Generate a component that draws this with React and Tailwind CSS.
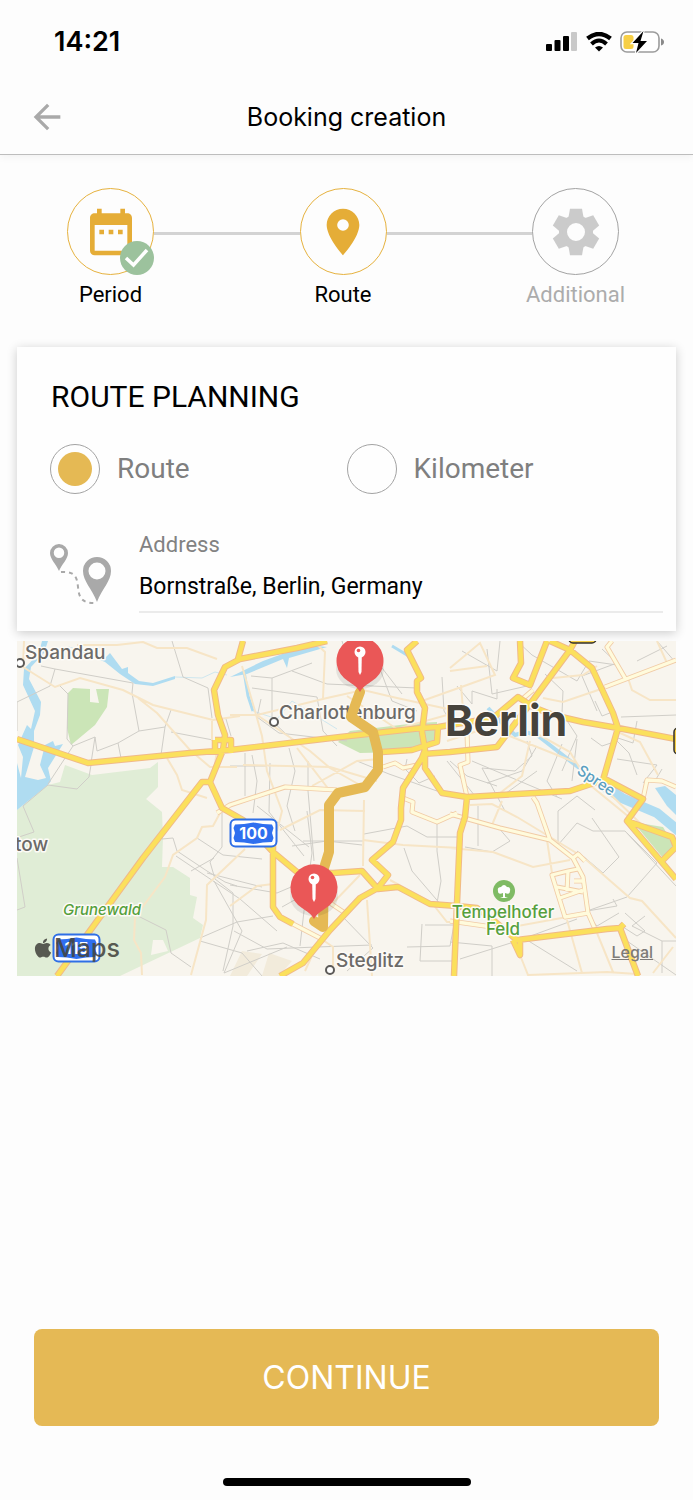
import React, { useState } from 'react';
import { MdArrowBack, MdDateRange, MdPlace } from 'react-icons/md';
import { FaApple } from 'react-icons/fa';

const steps = [
  { title: 'Period', icon: MdDateRange, ring: 'border-[#e6b23f]', color: 'text-[#e5ad37]', label: 'text-black', done: true },
  { title: 'Route', icon: MdPlace, ring: 'border-[#e6b23f]', color: 'text-[#e5ad37]', label: 'text-black' },
  { title: 'Additional', icon: GearIcon, ring: 'border-[#a3a3a3]', color: 'text-[#cbcbcb]', label: 'text-[#acacac]' },
];

const modes = [
  { id: 'route', title: 'Route' },
  { id: 'kilometer', title: 'Kilometer' },
];

const greyLines = [
  'M155 0 166 36 191 47 195 77', 'M24 25 38 28 116 42 115 52 122 90 148 86 154 69', 'M38 28 33 45 0 61V90',
  'M43 45 51 53 50 98 56 105 31 143M56 105 78 96 80 110 101 102 122 90', 'M101 102 104 117M148 86 144 114M154 91 196 99',
  'M74 124 72 136 60 148 31 144 6 165 17 191 2 196', 'M0 217 8 266 0 269M78 96 74 122', 'M209 78 214 95',
  'M145 198 156 197 160 210 190 230 208 241 220 245', 'M159 215 223 258 260 290', 'M180 197 206 214 245 218',
  'M205 172V206L193 221 198 238 216 252V285L206 330', 'M197 217 174 230M197 240 225 290 207 332 270 306',
  'M121 275 149 289 154 312 174 326', 'M183 297 220 281 256 275M183 300 225 312 245 335', 'M190 232 245 246',
  'M234 35 255 37 295 22M275 30 310 43 400 47', 'M255 37V80L281 104', 'M235 47 300 56 306 90 320 105',
  'M244 58 240 76 262 92 330 100', 'M235 114 240 140 236 172M228 112V155', 'M253 122 252 171 287 215',
  'M272 107 278 130 270 165 278 190', 'M291 120V150L297 220M213 125H250', 'M325 0 332 22 352 10 385 53',
  'M360 20 375 60 400 70', 'M425 36 427 70 440 90M430 120 458 155', 'M390 118 388 128 402 142 418 135',
  'M340 120 372 133 420 150', 'M347 193 390 185 410 196H440', 'M286 200H346M275 205 310 200 345 204',
  'M387 207 395 230 425 265M420 181V210L424 240 420 262', 'M405 283 403 320H440M408 284H437L433 305 390 306',
  'M325 275 356 307 330 330', 'M213 244 260 252 300 235', 'M265 266 290 252M230 310 266 302 303 318',
  'M217 290 250 308 300 306 355 304', 'M290 170 295 212 287 270 283 305', 'M240 165 292 206',
  'M445 10 480 30 483 0M470 8 475 53 510 45', 'M440 45 455 63V50L480 58V48', 'M500 0 515 14 560 40 572 20 600 24',
  'M528 33 546 50 545 72 560 95 545 130', 'M578 60 585 75 598 70M604 76 659 74', 'M620 80 616 102 601 97',
  'M574 97 585 105 600 100 612 112 620 134', 'M510 100 515 115 498 130 465 127', 'M465 127 488 170M455 120 545 158',
  'M470 142 505 130 520 105M485 155 520 130', 'M545 103 530 140 540 156M560 98 555 140', 'M600 118 640 124 626 142',
  'M645 128 638 140M586 45 590 60', 'M620 20 650 5M640 0 659 22', 'M433 120 450 135 480 145',
  'M461 165V205M480 185 493 200 475 211 448 206', 'M541 204V170L560 155 578 169M541 204 560 182 576 190',
  'M575 177 602 216 586 232 560 210M576 190 608 190 659 245', 'M610 192 640 222 610 256 570 270 600 265 596 258',
  'M571 275 580 285 602 272M608 272 628 290 620 295 606 286', 'M443 318 500 300 560 278M433 301 475 305V335',
  'M510 299 560 330M645 332V300L615 285 628 275', 'M645 300H659M610 300 659 334', 'M585 8 600 22 565 35 580 70',
];

const tanRoads = [
  'M6 26 38 46 63 37 106 49 136 64 196 79 223 75', 'M121 57 140 72 173 109 193 126H220', 'M60 4 100 4 126 1 140 7 170 7 200 18',
  'M150 117 160 134 165 149 190 157', 'M195 79V100M200 110 196 135M7 0 6 26', 'M203 172 196 185 185 186 180 197 156 214 148 236 118 276 117 299 124 312 125 334',
  'M228 208 190 244 189 279 174 334', 'M225 25 238 70 245 95 250 130 265 170 260 190', 'M296 0 308 11 306 57',
  'M213 74H240L310 57 346 49 380 57 440 70', 'M240 74 293 110 313 127 350 148', 'M226 124 313 126 360 140',
  'M280 107 313 150M330 55 380 88 430 74', 'M295 145 340 120 362 118', 'M433 27 463 2 478 34 450 44 405 60',
  'M433 30 470 25M444 44 448 94', 'M526 57 546 61 590 46M536 37 566 34 580 25', 'M611 37 615 49 633 59H659',
  'M601 91 623 101 641 134M515 90 553 111 573 144 612 176', 'M513 100 505 135 478 156M490 94 560 122',
  'M263 189 303 169 348 170M347 159 346 225', 'M346 199 386 204 443 207', 'M350 259 355 335', 'M343 234 313 265M303 297 316 306V330M303 297 288 330',
  'M373 239 415 262 430 281H440', 'M433 207 476 211 516 226 553 219', 'M453 164 475 163 500 176 566 216 613 257 625 260 659 297',
  'M550 279 565 332M580 292 596 331M503 314 511 334 590 331 620 333', 'M490 287 550 276M530 199 535 232', 'M656 306 636 332M485 160 475 184',
  'M640 0 650 22M590 150 626 185', 'M213 265 240 245 256 243', 'M430 100 460 90 476 77',
];

const paleRoads = [
  'M433 173 483 187 533 199 556 217 566 236 571 272 578 288', 'M516 156 520 162 533 199', 'M571 272 548 276 535 234 551 230 561 228',
  'M540 246 566 251M543 257 566 249M551 230 550 250M557 240H566', 'M595 0 590 6 608 37M588 46 659 19', 'M626 158 630 139 645 140 659 146',
  'M450 92 451 121 443 124 450 156', 'M200 172 213 164 268 146 320 149', 'M366 126 378 122 386 127 400 124 404 120',
  'M386 157 396 161 395 171 420 181 440 172', 'M276 283 303 297M310 260 328 272', 'M433 280 475 286', 'M516 49 503 60', 'M556 217 561 213 568 220',
];

const mainRoads = [
  'M0 98 71 122 173 112 213 109 323 96 405 87 421 86 420 101 395 109 365 111', 'M226 0 221 18',
  'M310 0 280 7 223 18 208 26 197 49 201 74 208 94 206 109 193 141 205 167 226 179 256 211 280 231 316 232 345 230 361 248 381 246 413 263 440 265 460 267 476 279 500 299 590 288 603 287 621 335',
  'M193 141H185L126 217 40 335', 'M198 99H214V112M198 99V112', 'M256 200V266L263 276 276 283',
  'M263 335 286 322 313 289 343 257 361 247 371 234 355 219 376 201 384 179V167L386 147 405 117 408 109 405 91 408 67 400 51V40L404 37 390 9 400 0',
  'M408 109V127L425 152 450 156 553 150 586 139 601 87 596 72 575 27 553 9 533 0', 'M558 0 553 9 516 59 480 106 433 111 406 113',
  'M503 0 504 22 496 37 513 44 530 0', 'M659 98 601 87 566 81 536 74 516 66 501 56 476 77 433 84 421 86',
  'M586 137 626 158 610 180 659 238', 'M610 180 655 196 659 206 646 219', 'M450 156 448 176 443 192 440 262 437 335',
  'M496 299 503 314V300M603 287 607 283',
];

const placeLabels = [
  { text: 'Spandau', x: 8, y: 18 },
  { text: 'Charlottenburg', x: 262, y: 78 },
  { text: 'Steglitz', x: 319, y: 326 },
  { text: 'tow', x: -2, y: 210 },
];

const teeth = [0, 60, 120, 180, 240, 300];

function GearIcon({ className }) {
  return (
    <svg className={`w-14 h-14 ${className}`} viewBox="-28 -28 56 56" fill="currentColor">
      <circle r="13" fill="none" stroke="currentColor" strokeWidth="8" />
      {teeth.map((angle) => (
        <path key={angle} d="M-6-23.300H6L8-12H-8Z" transform={`rotate(${angle})`} />
      ))}
    </svg>
  );
}

function StatusBar() {
  return (
    <div className="h-[84px] flex items-center justify-between pl-[54px] pr-[29px]">
      <span className="font-['Inter',sans-serif] text-[27px] leading-8 font-semibold">14:21</span>
      <div className="flex items-center gap-2">
        <svg className="w-8 h-5" viewBox="0 0 32 20">
          <rect x="0" y="12" width="6" height="7" rx="1" />
          <rect x="8.500" y="8" width="6" height="11" rx="1" />
          <rect x="17" y="4" width="6" height="15" rx="1" />
          <rect x="25" y="0" width="6" height="19" rx="1" fill="#c9c9c9" />
        </svg>
        <svg className="w-[26px] h-5" viewBox="0 0 26 20">
          <path d="M1.500 6.500Q13-2.500 24.500 6.500" fill="none" stroke="#000" strokeWidth="4.400" />
          <path d="M5.500 12Q13 5 20.500 12" fill="none" stroke="#000" strokeWidth="4" />
          <path d="M9 15.500Q13 12.500 17 15.500L13 19.500Z" />
        </svg>
        <svg className="w-11 h-[22px]" viewBox="0 0 44 22">
          <rect x="1" y="1" width="38" height="20" rx="6" fill="#fff" stroke="#9c9c9c" strokeWidth="1.600" />
          <path d="M41 7.500Q44 8.500 44 11T41 14.500Z" fill="#8a8a8a" />
          <rect x="3.500" y="4" width="10" height="14" rx="2.500" fill="#f7cf46" />
          <path d="M23.500 0 12.500 12H18.500L16 22 27 10H20.500Z" stroke="#fff" strokeWidth="2.400" paintOrder="stroke" />
        </svg>
      </div>
    </div>
  );
}

function StepBar() {
  return (
    <ol className="flex items-start pt-[33px] pl-[67px] pr-[74px]">
      {steps.map((step, index) => (
        <React.Fragment key={step.title}>
          {index > 0 && <li aria-hidden="true" className="flex-1 h-[3px] mt-11 bg-[#d3d3d3]" />}
          <li className="w-[87px] flex flex-col items-center">
            <div className={`relative w-[87px] h-[87px] rounded-full border flex items-center justify-center ${step.ring}`}>
              <step.icon className={step.color} size={56} />
              {step.done && (
                <svg className="absolute -right-px -bottom-px w-[34px] h-[34px]" viewBox="0 0 34 34">
                  <circle cx="17" cy="17" r="17" fill="#9cc29d" />
                  <path d="M6 17 13.500 24 27 9" fill="none" stroke="#fff" strokeWidth="3.500" />
                </svg>
              )}
            </div>
            <span className={`mt-1.5 text-[22px] leading-7 whitespace-nowrap ${step.label}`}>{step.title}</span>
          </li>
        </React.Fragment>
      ))}
    </ol>
  );
}

function RouteIcon() {
  return (
    <svg className="w-[61px] h-[62px] shrink-0" viewBox="0 0 61 62">
      <g fill="#a9a9a9" fillRule="evenodd">
        <path d="M9 1a9 9 0 0 1 9 9c0 6-6 11-9 18C6 21 0 16 0 10a9 9 0 0 1 9-9Zm0 3.500a5.200 5.200 0 1 0 0 10.500 5.200 5.200 0 0 0 0-10.500Z" />
        <path d="M47 14a14 14 0 0 1 14 14c0 10-9 18-14 31-5-13-14-21-14-31a14 14 0 0 1 14-14Zm0 5.500a8.500 8.500 0 1 0 0 17 8.500 8.500 0 0 0 0-17Z" />
      </g>
      <path d="M11 29C25 28 27 34 28 44S31 61 47 60" fill="none" stroke="#a9a9a9" strokeWidth="2" strokeDasharray="4 4" />
    </svg>
  );
}

function Marker({ x, y }) {
  return (
    <g transform={`translate(${x} ${y})`}>
      <ellipse cx="0" cy="8" rx="24" ry="20" fill="#000" opacity="0.08" />
      <path d="M0 31C-3 25-8 23-12 20A23.500 23.500 0 1 1 12 20C8 23 3 25 0 31Z" fill="#ea5757" />
      <circle cy="-9" r="5.500" fill="#fff" />
      <circle cx="-1.500" cy="-10.500" r="1.800" fill="#ea5757" />
      <path d="M-1.800-5H1.800L1.500 11 0 14-1.500 11Z" fill="#fff" />
    </g>
  );
}

function Shield({ x, y, text }) {
  return (
    <g transform={`translate(${x} ${y})`}>
      <rect x="0.500" y="0.500" width="46" height="27" rx="5" fill="#fff" stroke="#2f6fe6" strokeWidth="2" />
      <path d="M5 5.500 14 5 23.500 3.500 33 5 42 5.500 43.500 9 42 14 43.500 19 42 23 33 23.500 23.500 25 14 23.500 5 23 3.500 19 5 14 3.500 9Z" fill="#2f6fef" />
      <text x="23.500" y="20" textAnchor="middle" fontSize="16" fontWeight="700" fill="#fff">{text}</text>
    </g>
  );
}

function RouteMap() {
  return (
    <div className="relative">
      <svg className="block w-full font-['Inter',sans-serif]" viewBox="0 0 659 335" role="img" aria-label="Map of the route">
        <rect width="659" height="335" fill="#f8f5ee" />

        {/* parks and forests */}
        <path d="M0 169 31 144 43 141 48 124 75 134 133 127 141 121V146L129 158 145 171 146 196 145 226H156L173 237V254L180 256 176 277 186 284 183 297 103 335H0Z" fill="#e0edd6" />
        <path d="M136 299H146L151 310 134 314Z" fill="#f8f5ee" />
        <path d="M51 52 56 47 73 48V61L82 62 79 48H92L90 66 78 84 54 104 50 87Z" fill="#cbe5b7" />
        <path d="M321 101 333 90 400 82 420 81V101L386 111 343 112Z" fill="#cbe5b7" />
        <path d="M616 181 646 186 658 206 646 217Z" fill="#cbe5b7" />
        <path d="M213 335 225 310 245 313 230 335ZM245 335 252 312 275 320 262 335Z" fill="#f2ebdb" />

        {/* water */}
        <g fill="#afdcf1">
          <path d="M25 0H31L27 12 14 26 12 38 24 61 23 74 17 90V106L8 136 21 139 29 137 23 124 28 104 36 100 38 105 46 103 31 127 34 140 31 144 0 169V122L4 137 6 116 1 104 10 84 14 88 18 70 6 44 7 28 22 12Z" />
          <path d="M50 5 88 17 93 12 105 28 111 26V32L122 40 136 42 158 35V38L136 45 118 43 103 33 88 21Z" />
          <path d="M213 36 246 20 290 4 310 6 272 17 270 27 266 18 230 33Z" />
          <path d="M638 147 648 145 659 154V174L650 165Z" />
        </g>
        <g fill="none" stroke="#afdcf1">
          <path d="M227 30 231 55 236 70" strokeWidth="3" />
          <path d="M375 5 390 14 398 22" strokeWidth="3" />
          <path d="M158 36 185 37 198 31 210 34M236 70 260 78 275 60 320 88" strokeWidth="1" stroke="#cfe7ef" />
          <path d="M471 67 485 82 498 94 508 91 520 94 561 126 593 151" strokeWidth="4" />
          <path d="M585 144 605 157 640 172 664 192" strokeWidth="10" />
        </g>

        <path d={greyLines.join('')} fill="none" stroke="#d0cec8" strokeWidth="1" />
        <path d={tanRoads.join('')} fill="none" stroke="#f7e5c6" strokeWidth="2" />
        <g fill="none" strokeLinejoin="round">
          <path d={paleRoads.join('')} stroke="#f1cba6" strokeWidth="5" />
          <path d={paleRoads.join('')} stroke="#fffbdc" strokeWidth="3.300" />
          <path d={mainRoads.join('')} stroke="#f0b989" strokeWidth="6.500" />
          <path d={mainRoads.join('')} stroke="#fbe05c" strokeWidth="4.600" />
        </g>

        <g fill="#6c6a68" stroke="#fdfbf7" strokeWidth="3" strokeLinejoin="round" paintOrder="stroke" fontSize="19" fontWeight="500">
          {placeLabels.map((place) => (
            <text key={place.text} x={place.x} y={place.y}>{place.text}</text>
          ))}
          <text x="428" y="95" fontSize="43" fontWeight="700" fill="#46433c">Berlin</text>
          <g fill="#55a03c" fontSize="17">
            <text x="46" y="274" fontSize="15" fontStyle="italic">Grunewald</text>
            <text x="486" y="277" textAnchor="middle">Tempelhofer</text>
            <text x="486" y="294" textAnchor="middle">Feld</text>
          </g>
          <text transform="translate(559 132) rotate(34)" fontSize="15" fill="#5a9fc1">Spree</text>
        </g>
        <g fill="#fff" stroke="#5c5a58" strokeWidth="2">
          <circle cx="3" cy="22" r="4" />
          <circle cx="257" cy="81" r="4" />
          <circle cx="313" cy="329" r="4" />
        </g>

        <circle cx="487" cy="250" r="11" fill="#7fbb64" />
        <path d="M486 256V252Q481 254 481 250 480 246 484 246 487 242 490 246 494 246 493 250 493 254 488 252V256L491 257H483Z" fill="#fff" />
        <g fill="#f6cf45" stroke="#33312c" strokeWidth="1.500">
          <rect x="552" y="-12" width="27" height="14" rx="4" />
          <rect x="657" y="87" width="27" height="26" rx="4" />
        </g>

        <path d="M343 51 340 59 334 76 356 91 361 111V129L348 146 321 152 312 164V211L307 227 306 286 297 280" fill="none" stroke="#e5b954" strokeWidth="10" strokeLinejoin="round" strokeLinecap="round" />
        <Shield x={213} y={178} text="100" />
        <Shield x={36} y={293} text="115" />
        <Marker x={343} y={20} />
        <Marker x={297} y={247} />

        <g fill="#45453f" opacity="0.88">
          <FaApple x="15" y="296" size={22} color="#45453f" />
          <text x="37" y="316" fontSize="25" fontWeight="500">Maps</text>
        </g>
      </svg>
      <a href="#legal" className="absolute right-[23px] bottom-[14px] font-['Inter',sans-serif] text-base leading-5 font-medium text-[#7d7b78] underline">
        Legal
      </a>
    </div>
  );
}

function App() {
  const [mode, setMode] = useState('route');
  const [address, setAddress] = useState('Bornstraße, Berlin, Germany');

  return (
    <div className="min-h-screen flex flex-col bg-[#fdfdfd] text-black font-['Roboto',sans-serif]">
      <header className="border-b border-[#bdbdbd] shadow-[0_2px_8px_rgba(0,0,0,0.05)]">
        <StatusBar />
        <div className="h-[70px] grid grid-cols-[1fr_auto_1fr] items-center px-[27px] pb-1">
          <button type="button" aria-label="Back" className="justify-self-start text-[#a9a9a9]">
            <MdArrowBack size={40} />
          </button>
          <h1 className="font-['Inter',sans-serif] text-[25px] leading-8">Booking creation</h1>
        </div>
      </header>

      <StepBar />

      <main className="px-[17px] pt-[38px] flex flex-col gap-2.5">
        <form className="bg-[#fefefe] pt-[30px] pb-[18px] shadow-[0_2px_10px_rgba(0,0,0,0.2)]">
          <h2 className="px-[34px] text-[30px] leading-10">ROUTE PLANNING</h2>
          <div className="mt-[27px] px-[33px] grid grid-cols-2">
            {modes.map((item) => (
              <label key={item.id} className="flex items-center gap-[17px] text-[28px] leading-9 text-[#7f7f7f]">
                <input
                  type="radio"
                  name="mode"
                  value={item.id}
                  checked={mode === item.id}
                  onChange={() => setMode(item.id)}
                  className="appearance-none w-[50px] h-[50px] shrink-0 rounded-full border border-[#a3a3a3] p-[7px] bg-clip-content checked:bg-[#e5b954]"
                />
                {item.title}
              </label>
            ))}
          </div>
          <div className="mt-[37px] pl-[33px] pr-[13px] flex items-end gap-7">
            <div className="pb-2">
              <RouteIcon />
            </div>
            <div className="flex-1 min-w-0 flex flex-col">
              <label htmlFor="address" className="text-[22px] leading-7 text-[#828282]">Address</label>
              <input
                id="address"
                type="text"
                value={address}
                onChange={(e) => setAddress(e.target.value)}
                className="w-full h-[54px] pt-0.5 border-b-2 border-[#ebebeb] text-[23px] outline-none"
              />
            </div>
          </div>
        </form>

        <RouteMap />
      </main>

      <footer className="mt-auto px-[34px] pt-10 pb-3.5 flex flex-col items-center">
        <button type="button" className="w-full h-[97px] rounded-lg bg-[#e5b955] text-white font-['Inter',sans-serif] text-[32px] leading-10">
          CONTINUE
        </button>
        <div className="mt-[52px] w-[248px] h-2 rounded-full bg-black" />
      </footer>
    </div>
  );
}

export default App;
